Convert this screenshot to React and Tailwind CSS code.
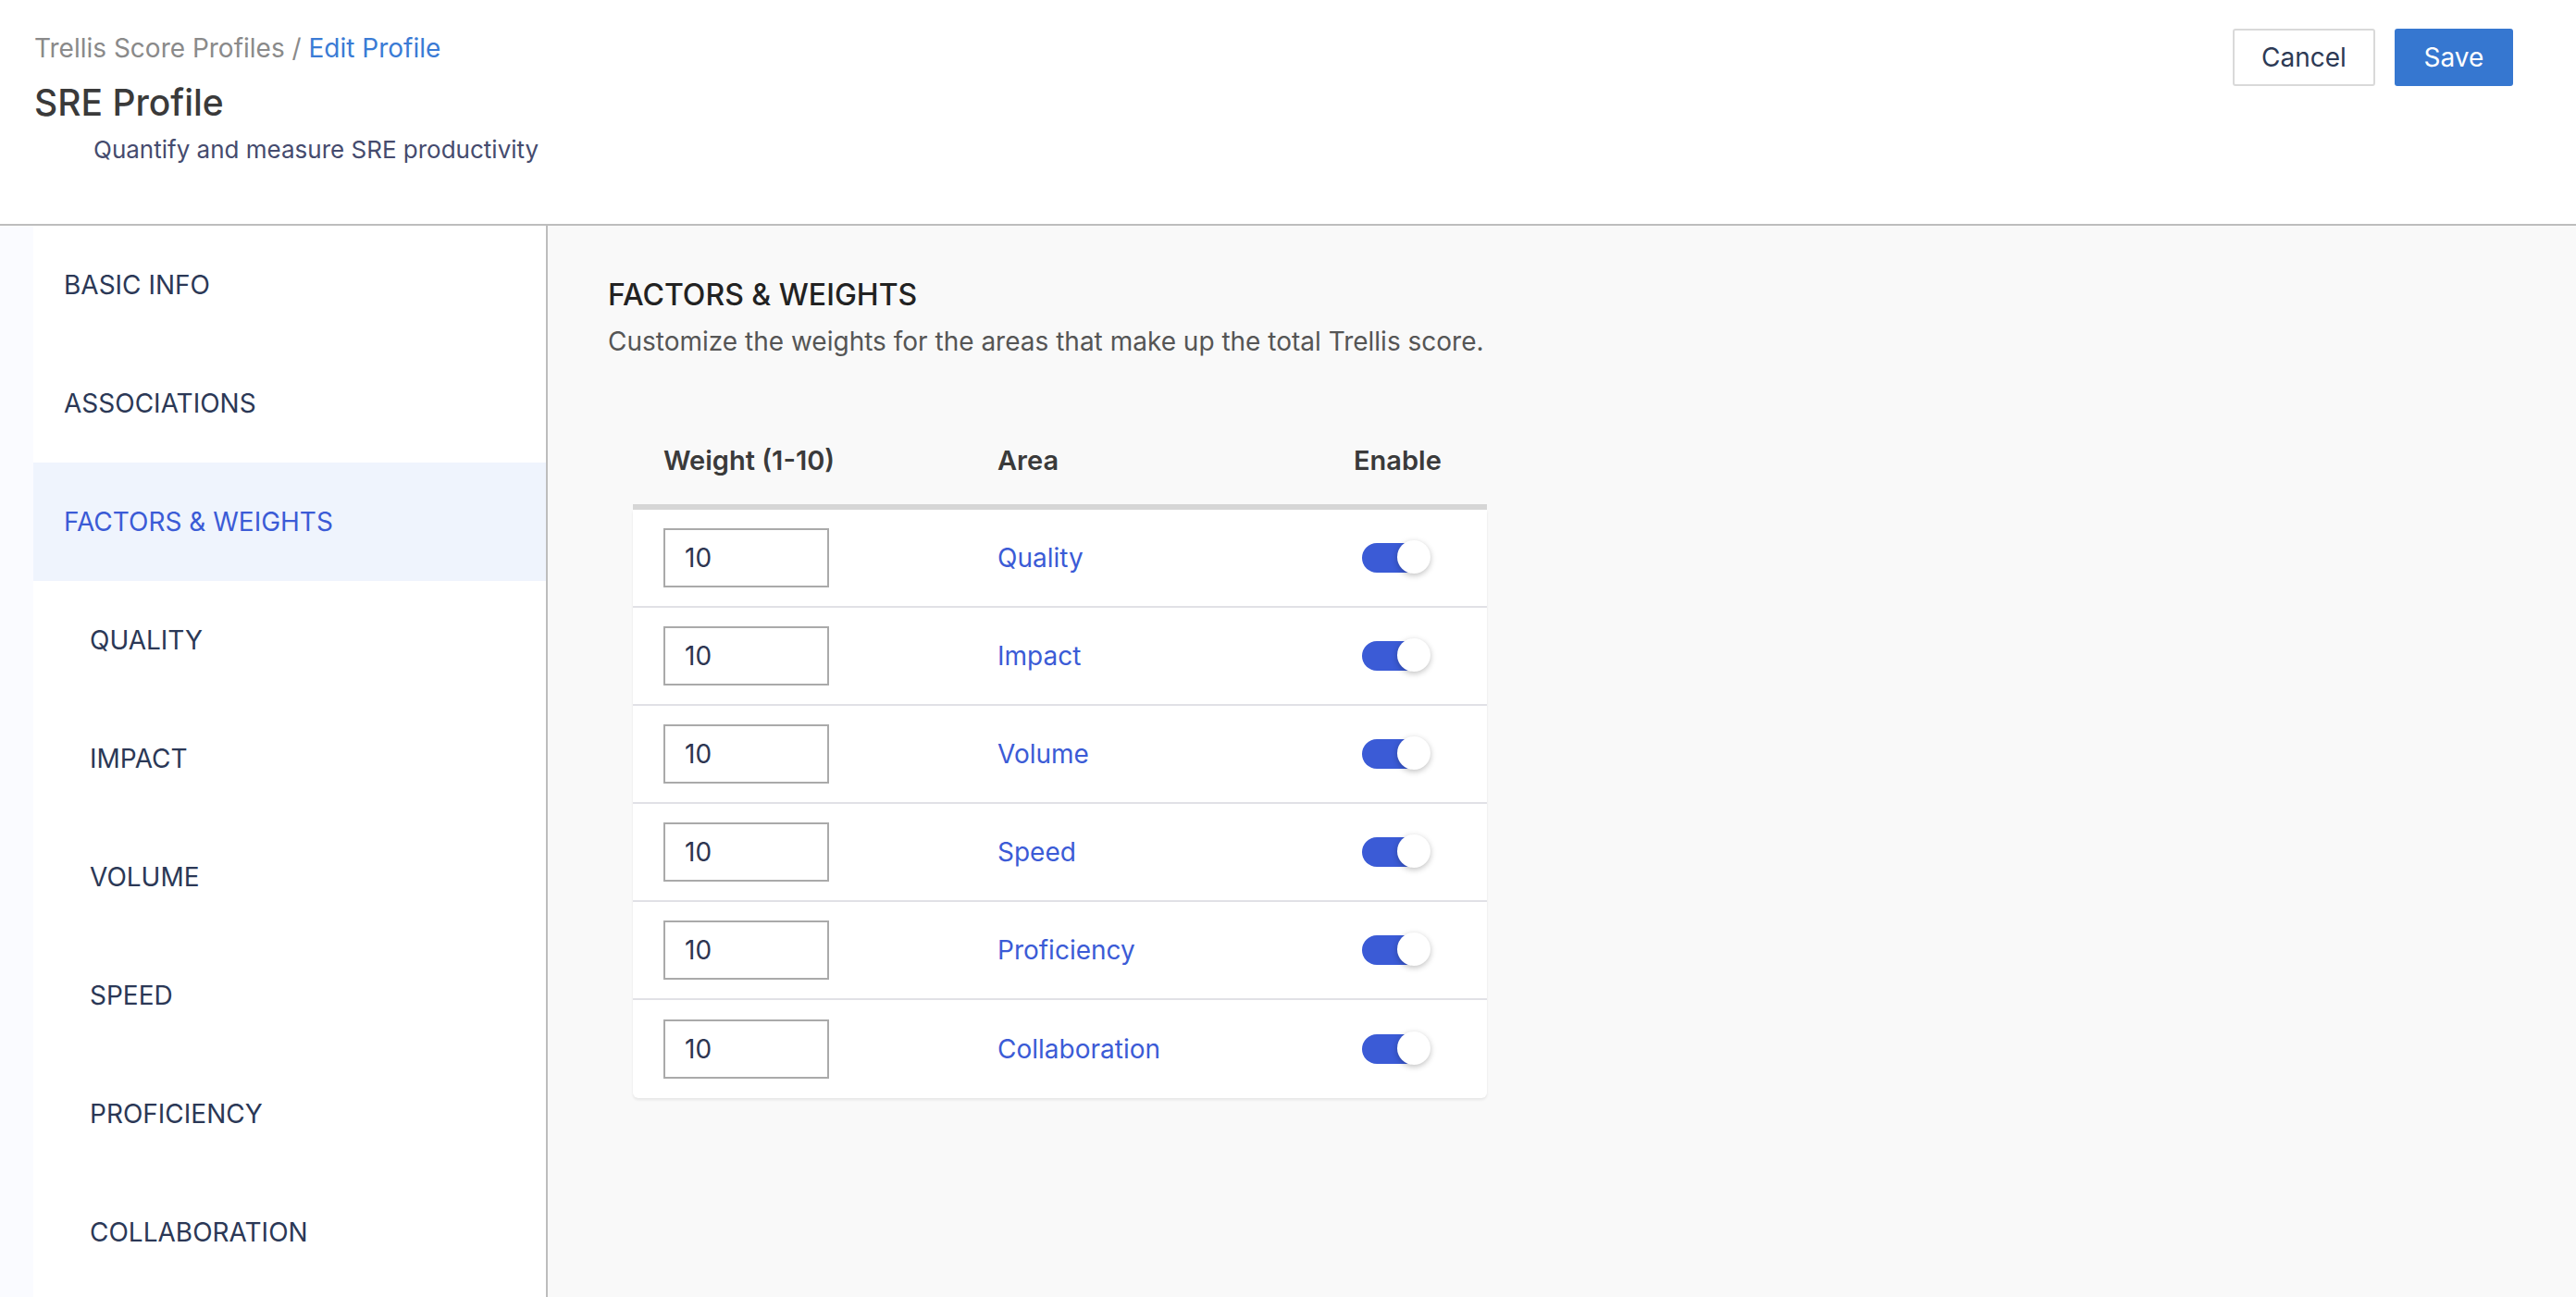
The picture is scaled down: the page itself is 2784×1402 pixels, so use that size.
import { useState } from 'react';

const navItems = [
  { id: 'basic', label: 'BASIC INFO', sub: false },
  { id: 'assoc', label: 'ASSOCIATIONS', sub: false },
  { id: 'factors', label: 'FACTORS & WEIGHTS', sub: false },
  { id: 'quality', label: 'QUALITY', sub: true },
  { id: 'impact', label: 'IMPACT', sub: true },
  { id: 'volume', label: 'VOLUME', sub: true },
  { id: 'speed', label: 'SPEED', sub: true },
  { id: 'proficiency', label: 'PROFICIENCY', sub: true },
  { id: 'collab', label: 'COLLABORATION', sub: true },
];

const areas = ['Quality', 'Impact', 'Volume', 'Speed', 'Proficiency', 'Collaboration'];

function Toggle({ on, onChange }) {
  return (
    <button
      onClick={onChange}
      className={`relative ml-[9px] h-[32px] w-[68px] rounded-full ${on ? 'bg-[#3b5bd6]' : 'bg-[#c4c4c4]'}`}
    >
      <span
        className={`absolute top-[-3px] h-[36px] w-[36px] rounded-full bg-white shadow-[0_2px_6px_rgba(0,0,0,0.25)] ${on ? 'right-[-6px]' : 'left-[-2px]'}`}
      />
    </button>
  );
}

export default function App() {
  const [active, setActive] = useState('factors');
  const [rows, setRows] = useState(areas.map(name => ({ name, weight: '10', on: true })));

  const update = (i, patch) => setRows(rows.map((r, j) => (j === i ? { ...r, ...patch } : r)));

  return (
    <div className="flex h-[1402px] w-full flex-col bg-white font-[Inter,sans-serif]">
      {/* Header */}
      <div className="flex h-[244px] shrink-0 items-start justify-between border-b-2 border-[#bdbdbd] bg-white pl-[37px] pr-[68px]">
        <div className="pt-[34px]">
          <div className="text-[28px] leading-[36px] text-[#8a8a8a]">
            Trellis Score Profiles / <span className="text-[#3a7bd5]">Edit Profile</span>
          </div>
          <h1 className="mt-[19px] text-[39px] font-medium leading-[44px] text-[#3a3a3a]">SRE Profile</h1>
          <p className="mt-[13px] pl-[64px] text-[26px] leading-[32px] text-[#454b6e]">
            Quantify and measure SRE productivity
          </p>
        </div>
        <div className="flex gap-[21px] pt-[31px]">
          <button className="h-[62px] w-[154px] rounded-[3px] border-2 border-[#d9d9d9] bg-white text-[28px] text-[#2d3a55]">
            Cancel
          </button>
          <button className="h-[62px] w-[128px] rounded-[3px] bg-[#3677d0] text-[28px] text-white">
            Save
          </button>
        </div>
      </div>

      {/* Body */}
      <div className="flex min-h-0 flex-1">
        <div className="w-[36px] shrink-0 bg-[#fafbff]" />
        <nav className="w-[556px] shrink-0 border-r-2 border-[#bdbdbd] bg-white">
          {navItems.map(item => (
            <button
              key={item.id}
              onClick={() => setActive(item.id)}
              className={`flex h-[128px] w-full items-center text-left text-[28px] ${item.sub ? 'pl-[61px]' : 'pl-[33px]'} ${
                active === item.id ? 'bg-[#eff4fd] text-[#3b5bd6]' : 'text-[#2b3856]'
              }`}
            >
              {item.label}
            </button>
          ))}
        </nav>

        <main className="flex-1 bg-[#f9f9f9] pl-[65px] pt-[55px]">
          <h2 className="text-[32px] font-medium leading-[40px] text-[#222222]">FACTORS &amp; WEIGHTS</h2>
          <p className="mt-[13px] text-[28px] leading-[34px] text-[#555555]">
            Customize the weights for the areas that make up the total Trellis score.
          </p>

          <div className="ml-[27px] mt-[64px] w-[923px]">
            <div className="grid h-[101px] grid-cols-[361px_385px_1fr] items-center border-b-[6px] border-[#d6d6d6] pl-[33px] text-[29px] font-semibold text-[#3a3a3a]">
              <div>Weight (1-10)</div>
              <div>Area</div>
              <div>Enable</div>
            </div>
            <div className="rounded-b-[6px] bg-white shadow-[0_2px_3px_rgba(0,0,0,0.08)]">
              {rows.map((row, i) => (
                <div
                  key={row.name}
                  className={`grid h-[106px] grid-cols-[361px_385px_1fr] items-center pl-[33px] ${
                    i < rows.length - 1 ? 'border-b-2 border-[#e1e1e6]' : ''
                  }`}
                >
                  <div>
                    <input
                      value={row.weight}
                      onChange={e => update(i, { weight: e.target.value })}
                      className="h-[64px] w-[179px] border-2 border-[#aaaaaa] bg-white pl-[21px] text-[28px] text-[#2d3551] outline-none"
                    />
                  </div>
                  <div className="text-[28px] text-[#3b5bd6]">{row.name}</div>
                  <div className="flex items-center">
                    <Toggle on={row.on} onChange={() => update(i, { on: !row.on })} />
                  </div>
                </div>
              ))}
            </div>
          </div>
        </main>
      </div>
    </div>
  );
}
